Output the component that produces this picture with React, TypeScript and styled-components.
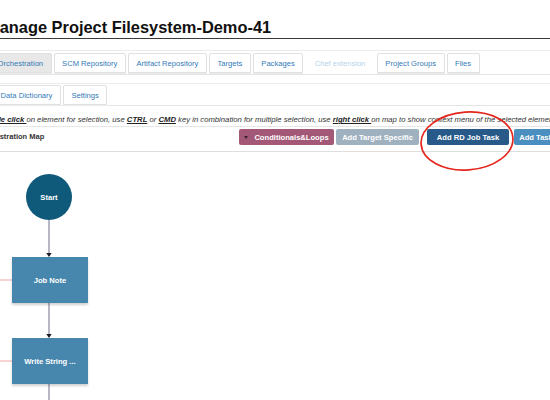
import React from 'react';
import styled, { createGlobalStyle } from 'styled-components';

const GlobalStyle = createGlobalStyle`
  html, body {
    margin: 0;
    padding: 0;
    background: #fff;
    overflow: hidden;
  }
  body {
    font-family: "Liberation Sans", Arial, sans-serif;
  }
`;

const Page = styled.div`
  position: relative;
  width: 550px;
  height: 400px;
  overflow: hidden;
`;

const Title = styled.h2`
  margin: 0 0 0 -14px;
  padding-top: 16px;
  font-size: 16.4px;
  line-height: 22px;
  font-weight: bold;
  color: #111;
  white-space: nowrap;
  border-bottom: 1px solid #3a3a3a;
`;

const TabBar = styled.ul<{ $offset: number; $top: number; $pad: string }>`
  list-style: none;
  display: flex;
  gap: 2px;
  margin: ${p => p.$top}px 0 0 ${p => p.$offset}px;
  padding: ${p => p.$pad};
  border-top: 1px solid #ececec;
  border-bottom: 1px solid #e4e4e4;
`;

const Tab = styled.li<{ $active?: boolean; $disabled?: boolean }>`
  box-sizing: border-box;
  height: 20px;
  padding: 0 ${p => (p.$disabled ? '8.5px' : '7.5px')};
  display: flex;
  align-items: center;
  font-size: 7.6px;
  white-space: nowrap;
  color: ${p => (p.$disabled ? '#b5d2ea' : '#337ab7')};
  background: ${p => (p.$active ? '#e8e8e8' : '#fff')};
  border: 1px solid ${p => (p.$disabled ? 'transparent' : '#e0e0e0')};
  border-radius: 2px 2px 0 0;
  box-shadow: ${p => (p.$disabled ? 'none' : '0 1px 0 #ececec')};
`;

const Hint = styled.p`
  margin: 0 0 0 -21px;
  padding: 8px 0 0;
  height: 12px;
  line-height: 12px;
  font-size: 7.7px;
  font-style: italic;
  color: #333;
  white-space: nowrap;
  border-bottom: 1px solid #e6e6e6;

  b {
    font-weight: bold;
    color: #222;
    text-decoration: underline;
  }
`;

const MapHeader = styled.div`
  box-sizing: border-box;
  display: flex;
  align-items: flex-start;
  height: 25px;
  margin: 0 -8px 0 -22px;
  padding-top: 2px;
  border-bottom: 1px solid #dedede;
`;

const MapTitle = styled.span`
  line-height: 16px;
  font-size: 7.5px;
  font-weight: bold;
  color: #333;
  white-space: nowrap;
`;

const ButtonRow = styled.div`
  display: flex;
  margin-left: auto;
`;

const ActionButton = styled.button<{ $tone: string; $width: number; $gap: number }>`
  box-sizing: border-box;
  display: inline-flex;
  align-items: center;
  justify-content: center;
  gap: 6px;
  height: 16px;
  width: ${p => p.$width}px;
  margin-left: ${p => p.$gap}px;
  padding: 0;
  border: none;
  border-radius: 2px;
  background: ${p => p.$tone};
  color: #fff;
  font: bold 7.6px "Liberation Sans", Arial, sans-serif;
  white-space: nowrap;
`;

const Caret = styled.span`
  width: 0;
  height: 0;
  border-left: 2px solid transparent;
  border-right: 2px solid transparent;
  border-top: 3px solid #3a2330;
`;

const Canvas = styled.div`
  height: 250px;

  svg {
    display: block;
  }
`;

const Annotation = styled.svg`
  position: absolute;
  left: 418px;
  top: 108px;
`;

const tabsTop = [
  { label: 'Orchestration', active: true },
  { label: 'SCM Repository' },
  { label: 'Artifact Repository' },
  { label: 'Targets' },
  { label: 'Packages' },
  { label: 'Chef extension', disabled: true },
  { label: 'Project Groups' },
  { label: 'Files' },
];

const EDGE = '#9090aa';
const NODE = '#4787ae';

const Arrow = ({ y }: { y: number }) => (
  <path d={`M46.3 ${y - 4} L51.7 ${y - 4} L49 ${y} Z`} fill="#1d1d2a" />
);

const TaskNode = ({ y, label }: { y: number; label: string }) => (
  <g>
    <line x1={0} y1={y + 23} x2={12} y2={y + 23} stroke="#f2a7a7" strokeWidth={1} />
    <rect x={12} y={y} width={76} height={46} fill={NODE} filter="url(#shadow)" />
    <text x={50} y={y + 26} textAnchor="middle" fill="#fff" fontSize="7.6" fontWeight="bold"
      fontFamily='"Liberation Sans", Arial, sans-serif'>
      {label}
    </text>
  </g>
);

export default function App() {
  return (
    <Page>
      <GlobalStyle />
      <Title>Manage Project Filesystem-Demo-41</Title>

      <TabBar $offset={-11} $top={11} $pad="2px 0 1px">
        {tabsTop.map(t => (
          <Tab key={t.label} $active={t.active} $disabled={t.disabled}>
            {t.label}
          </Tab>
        ))}
      </TabBar>

      <TabBar $offset={-8} $top={8} $pad="1px 0 0">
        <Tab>Data Dictionary</Tab>
        <Tab>Settings</Tab>
      </TabBar>

      <Hint>
        <b>Double click </b> on element for selection, use <b>CTRL</b> or <b>CMD</b> key in combination for
        multiple selection, use <b>right click </b> on map to show context menu of the selected element
      </Hint>

      <MapHeader>
        <MapTitle>Orchestration Map</MapTitle>
        <ButtonRow>
          <ActionButton $tone="#a25876" $width={95} $gap={0}>
            <Caret />
            Conditionals&amp;Loops
          </ActionButton>
          <ActionButton $tone="#9fb1bf" $width={83} $gap={2}>
            Add Target Specific
          </ActionButton>
          <ActionButton $tone="#285a89" $width={82} $gap={8}>
            Add RD Job Task
          </ActionButton>
          <ActionButton $tone="#4b8fc0" $width={44} $gap={5}>
            Add Task
          </ActionButton>
        </ButtonRow>
      </MapHeader>

      <Canvas>
        <svg width="550" height="250" viewBox="0 0 550 250">
          <defs>
            <filter id="shadow" x="-10%" y="-10%" width="120%" height="130%">
              <feDropShadow dx="0" dy="2" stdDeviation="1" floodColor="#000" floodOpacity="0.18" />
            </filter>
          </defs>
          <line x1={49} y1={68} x2={49} y2={102} stroke={EDGE} strokeWidth={1.3} />
          <Arrow y={105} />
          <line x1={49} y1={151} x2={49} y2={183} stroke={EDGE} strokeWidth={1.3} />
          <Arrow y={186} />
          <line x1={49} y1={232} x2={49} y2={250} stroke={EDGE} strokeWidth={1.3} />

          <circle cx={49} cy={45} r={23} fill="#0f5a7a" />
          <text x={49} y={47.5} textAnchor="middle" fill="#fff" fontSize="7.6" fontWeight="bold"
            fontFamily='"Liberation Sans", Arial, sans-serif'>
            Start
          </text>

          <TaskNode y={105} label="Job Note" />
          <TaskNode y={186} label="Write String ..." />
        </svg>
      </Canvas>

      <Annotation width="100" height="68" viewBox="0 0 100 68">
        <ellipse cx={49} cy={33} rx={46} ry={29} fill="none" stroke="#e5261c" strokeWidth={1.7}
          transform="rotate(-4 49 33)" />
      </Annotation>
    </Page>
  );
}
